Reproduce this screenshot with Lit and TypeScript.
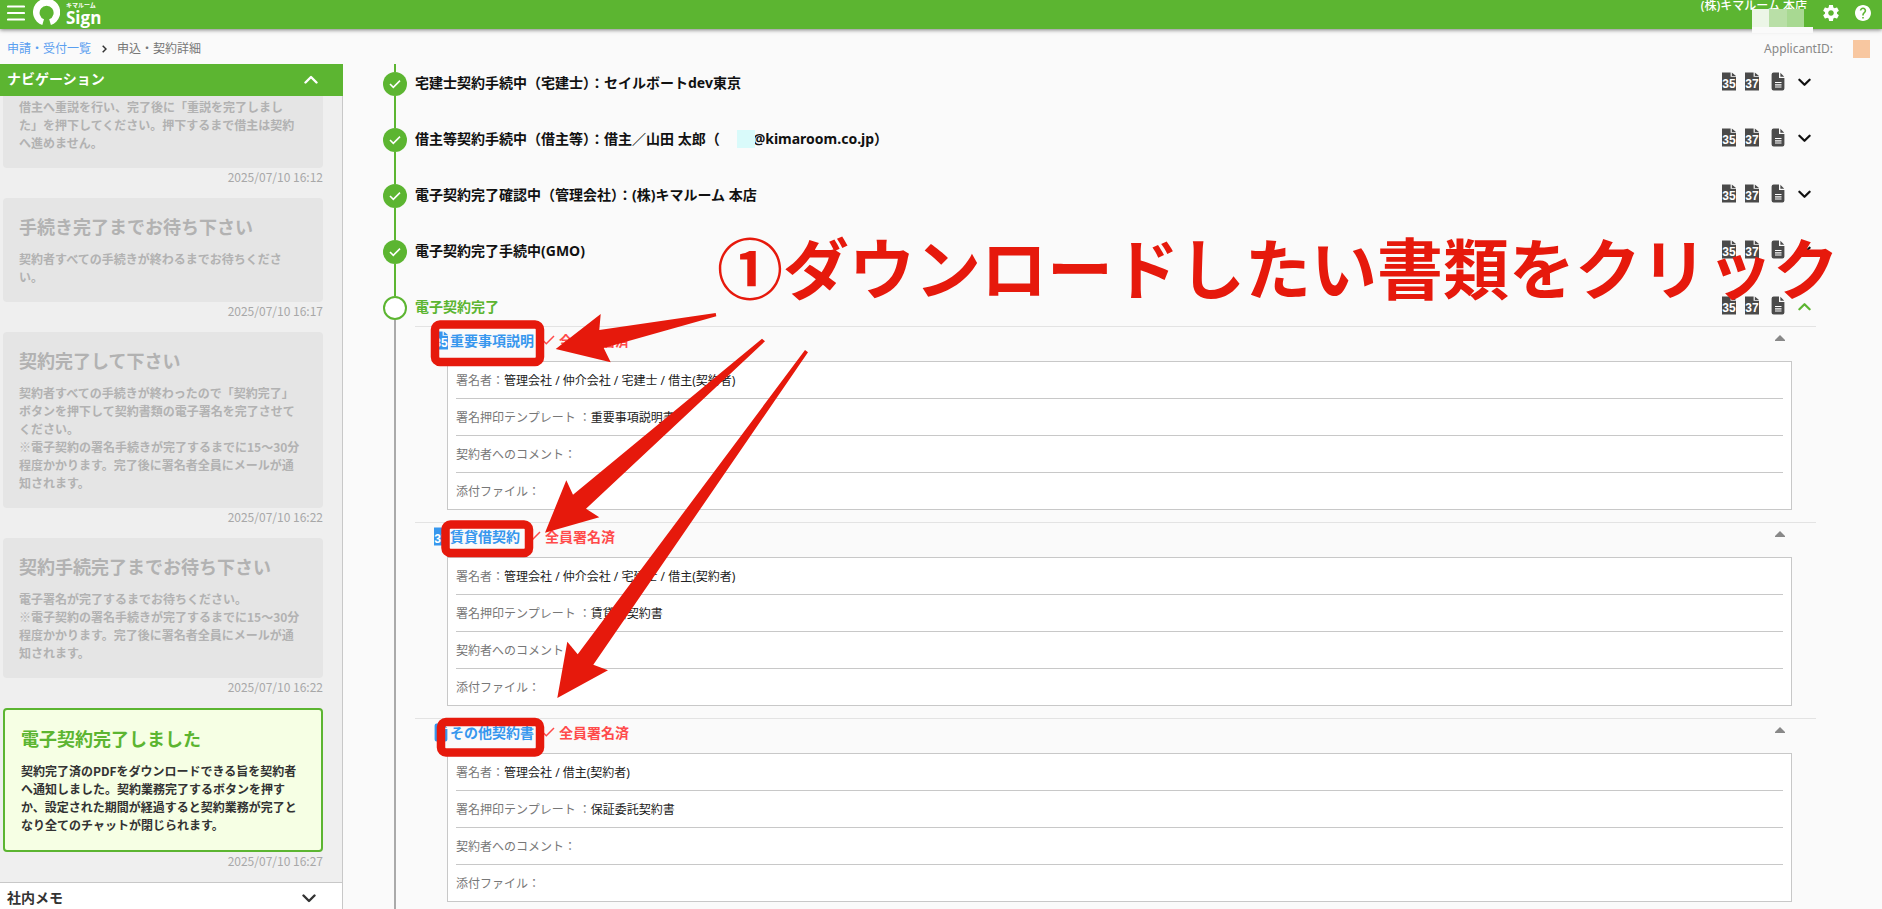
import { LitElement, html, svg, css, nothing } from "lit";
import { customElement, property } from "lit/decorators.js";
import { classMap } from "lit/directives/class-map.js";

interface Message {
  title?: string;
  body: string[];
  date: string;
  active?: boolean;
}

interface Doc {
  kind: "35" | "37" | "doc";
  name: string;
  signers: string;
  template: string;
}

const MESSAGES: Message[] = [
  {
    body: ["借主へ重説を行い、完了後に「重説を完了しました」を押下してください。押下するまで借主は契約へ進めません。"],
    date: "2025/07/10 16:12",
  },
  {
    title: "手続き完了までお待ち下さい",
    body: ["契約者すべての手続きが終わるまでお待ちください。"],
    date: "2025/07/10 16:17",
  },
  {
    title: "契約完了して下さい",
    body: [
      "契約者すべての手続きが終わったので「契約完了」ボタンを押下して契約書類の電子署名を完了させてください。",
      "※電子契約の署名手続きが完了するまでに15～30分程度かかります。完了後に署名者全員にメールが通知されます。",
    ],
    date: "2025/07/10 16:22",
  },
  {
    title: "契約手続完了までお待ち下さい",
    body: [
      "電子署名が完了するまでお待ちください。",
      "※電子契約の署名手続きが完了するまでに15～30分程度かかります。完了後に署名者全員にメールが通知されます。",
    ],
    date: "2025/07/10 16:22",
  },
  {
    title: "電子契約完了しました",
    body: [
      "契約完了済のPDFをダウンロードできる旨を契約者へ通知しました。契約業務完了するボタンを押すか、設定された期間が経過すると契約業務が完了となり全てのチャットが閉じられます。",
    ],
    date: "2025/07/10 16:27",
    active: true,
  },
];

const DOCS: Doc[] = [
  { kind: "35", name: "重要事項説明", signers: "管理会社 / 仲介会社 / 宅建士 / 借主(契約者)", template: "重要事項説明書" },
  { kind: "37", name: "賃貸借契約", signers: "管理会社 / 仲介会社 / 宅建士 / 借主(契約者)", template: "賃貸借契約書" },
  { kind: "doc", name: "その他契約書", signers: "管理会社 / 借主(契約者)", template: "保証委託契約書" },
];

const base = css`
  *,
  *::before,
  *::after {
    box-sizing: border-box;
  }
  button {
    appearance: none;
    border: 0;
    padding: 0;
    margin: 0;
    background: none;
    color: inherit;
    font: inherit;
    cursor: pointer;
    display: flex;
    align-items: center;
    justify-content: center;
  }
  svg {
    display: block;
    flex: none;
  }
  a {
    text-decoration: none;
  }
`;

const chevron = (up: boolean, w = 14) => html`
  <svg width=${w} height="9" viewBox="0 0 14 9" fill="none" stroke="currentColor" stroke-width="2.4" stroke-linecap="round" stroke-linejoin="round" aria-hidden="true">
    <path d=${up ? "M1.5 7.5 7 2l5.5 5.5" : "M1.5 1.5 7 7l5.5-5.5"}></path>
  </svg>
`;

@customElement("file-icon")
export class FileIcon extends LitElement {
  @property() kind: "35" | "37" | "doc" = "doc";

  static styles = css`
    :host {
      display: block;
      flex: none;
    }
    svg {
      display: block;
    }
    .num {
      font: bold 12px "Liberation Sans", Arial, sans-serif;
      fill: #fff;
      text-anchor: middle;
    }
  `;

  render() {
    if (this.kind === "doc") {
      return html`<svg width="14" height="19" viewBox="0 0 14 19" aria-hidden="true">
        <path fill="currentColor" d="M2.6.5H8V6h5.4v10.6a2 2 0 0 1-2 2H2.6a2 2 0 0 1-2-2V2.5a2 2 0 0 1 2-2z"></path>
        <path fill="currentColor" d="M9.4.7 13.200 4.700H9.400z"></path>
        <path stroke="#fff" stroke-width="1.2" d="M4 10.500h6.500M4 12.800h6.500M4 15h6.500"></path>
      </svg>`;
    }
    return html`<svg width="14" height="19" viewBox="0 0 14 19" aria-hidden="true">
      <path fill="currentColor" d="M0 .5h8.600v4.300H14V18.500H0z"></path>
      <path fill="currentColor" d="M9.800.5 14 4H9.800z"></path>
      ${svg`<text class="num" x="7" y="16">${this.kind}</text>`}
    </svg>`;
  }
}

@customElement("app-header")
export class AppHeader extends LitElement {
  static styles = [
    base,
    css`
      :host {
        display: block;
        position: relative;
        z-index: 1;
        flex: none;
      }
      .bar {
        display: flex;
        align-items: flex-start;
        height: 29px;
        padding: 0 11px 0 7px;
        background: #5cb531;
        color: #fff;
        box-shadow: 0 1px 4px rgba(0, 0, 0, 0.5);
      }
      .menu {
        width: 18px;
        height: 26px;
      }
      .logo {
        display: flex;
        gap: 6px;
        margin-left: 8px;
        color: #fff;
      }
      .words {
        display: flex;
        flex-direction: column;
        font-weight: 700;
      }
      .kana {
        font-size: 6px;
        line-height: 10px;
      }
      .sign {
        font: 700 17px/16px "Open Sans", sans-serif;
      }
      .right {
        position: relative;
        display: flex;
        gap: 16px;
        margin-left: auto;
      }
      .user {
        font-size: 12px;
        line-height: 11px;
        font-weight: 500;
      }
      .tool {
        width: 16px;
        height: 26px;
      }
      .masks {
        position: absolute;
        top: 9px;
        right: 58px;
        display: grid;
        grid-template-columns: 17px 18px 17px 9px;
        grid-template-rows: 18px 6px;
      }
      .m1 {
        background: #ecf6e7;
      }
      .m2 {
        background: #b9dfa7;
      }
      .m3 {
        background: #a8d992;
      }
      .m4 {
        background: #5cb531;
      }
      .m5 {
        grid-column: 1 / -1;
        background: #fafafa;
      }
    `,
  ];

  render() {
    return html`
      <header class="bar">
        <button class="menu" aria-label="メニュー">
          <svg width="18" height="16" viewBox="0 0 18 16" stroke="#fff" stroke-width="2.2" stroke-linecap="round">
            <path d="M1 1.500h16M1 8h16M1 14.500h16"></path>
          </svg>
        </button>
        <a class="logo" href="#" aria-label="キマルーム Sign">
          <svg width="27" height="26" viewBox="0 0 27 26">
            <path fill="#fff" d="M9.300 25 11 19.300A7 7 0 1 1 16.200 19.300L17.900 25A13.600 13.600 0 1 0 9.300 25z"></path>
          </svg>
          <span class="words"><span class="kana">キマルーム</span><span class="sign">Sign</span></span>
        </a>
        <div class="right">
          <span class="user">(株)キマルーム 本店</span>
          <button class="tool" aria-label="設定">
            <svg width="16" height="16" viewBox="2 2 20 20" fill="#fff">
              <path d="M19.430 12.980c.040-.320.070-.640.070-.980s-.030-.660-.070-.980l2.110-1.650c.190-.150.240-.420.120-.640l-2-3.460c-.120-.220-.390-.300-.610-.220l-2.490 1c-.520-.400-1.080-.730-1.690-.980l-.380-2.650C14.460 2.180 14.250 2 14 2h-4c-.250 0-.460.180-.490.420l-.380 2.650c-.610.250-1.170.590-1.690.980l-2.490-1c-.230-.090-.490 0-.610.220l-2 3.460c-.130.220-.070.490.120.640l2.110 1.650c-.040.320-.070.650-.070.980s.030.660.070.980l-2.110 1.650c-.190.150-.240.420-.120.640l2 3.460c.120.220.390.300.610.220l2.490-1c.520.400 1.080.730 1.690.980l.380 2.650c.030.240.240.420.490.420h4c.250 0 .460-.180.490-.420l.380-2.650c.610-.250 1.170-.590 1.690-.980l2.490 1c.230.090.490 0 .610-.220l2-3.460c.120-.220.070-.490-.120-.640l-2.110-1.650zM12 15.500c-1.930 0-3.500-1.570-3.500-3.500s1.570-3.500 3.500-3.500 3.500 1.570 3.500 3.500-1.570 3.500-3.500 3.500z"></path>
            </svg>
          </button>
          <button class="tool" aria-label="ヘルプ">
            <svg width="16" height="16" viewBox="2 2 20 20" fill="#fff">
              <path d="M12 2C6.480 2 2 6.480 2 12s4.480 10 10 10 10-4.480 10-10S17.520 2 12 2zm1 17h-2v-2h2v2zm2.070-7.750-.900.920C13.450 12.900 13 13.500 13 15h-2v-.500c0-1.100.450-2.100 1.170-2.830l1.240-1.260c.370-.360.590-.860.590-1.410 0-1.100-.900-2-2-2s-2 .900-2 2H8c0-2.210 1.790-4 4-4s4 1.790 4 4c0 .880-.360 1.680-.930 2.250z"></path>
            </svg>
          </button>
          <div class="masks" aria-hidden="true">
            <i class="m1"></i><i class="m2"></i><i class="m3"></i><i class="m4"></i><i class="m5"></i>
          </div>
        </div>
      </header>
    `;
  }
}

@customElement("nav-panel")
export class NavPanel extends LitElement {
  static styles = [
    base,
    css`
      :host {
        display: flex;
        flex-direction: column;
        flex: 0 0 343px;
        min-height: 0;
        background: #efefef;
        border-right: 1px solid #c8c8c8;
      }
      .head {
        display: flex;
        flex: none;
        align-items: center;
        justify-content: space-between;
        height: 32px;
        margin-right: -1px;
        padding: 0 25px 2px 7px;
        background: #5cb531;
        color: #fff;
      }
      h2 {
        margin: 0;
        font-size: 14px;
        line-height: 30px;
        font-weight: 700;
      }
      .list {
        flex: 1;
        min-height: 0;
        overflow: hidden;
        display: flex;
        flex-direction: column;
        justify-content: flex-end;
        padding: 0 19px 0 3px;
      }
      .card {
        flex: none;
        padding: 16px 23px 16px 16px;
        border-radius: 4px;
        background: #e5e5e5;
        color: #b2b2b2;
        font-weight: 700;
      }
      .card.active {
        border: 2px solid #5cb531;
        padding-right: 20px;
        background: #f6ffe4;
        color: #333;
      }
      h3 {
        margin: 0 0 9px;
        font-size: 18px;
        line-height: 27px;
        font-weight: 700;
        white-space: nowrap;
      }
      .active h3 {
        color: #5cb531;
      }
      p {
        margin: 0;
        font-family: "Noto Sans CJK JP", sans-serif;
        font-size: 12px;
        line-height: 18px;
      }
      time {
        flex: none;
        margin-bottom: 12px;
        font-family: "Noto Sans CJK JP", sans-serif;
        font-size: 12px;
        line-height: 18px;
        text-align: right;
        color: #a8a8a8;
      }
      .memo {
        display: flex;
        flex: 0 0 27px;
        justify-content: space-between;
        overflow: hidden;
        padding: 0 26px 0 7px;
        background: #fff;
        border-top: 1px solid #c8c8c8;
        color: #333;
      }
      .memo button,
      .head button {
        height: 30px;
      }
    `,
  ];

  render() {
    return html`
      <div class="head">
        <h2>ナビゲーション</h2>
        <button aria-label="閉じる">${chevron(true)}</button>
      </div>
      <div class="list">
        ${MESSAGES.map(
          (m) => html`
            <article class=${classMap({ card: true, active: !!m.active })}>
              ${m.title ? html`<h3>${m.title}</h3>` : nothing}
              ${m.body.map((line) => html`<p>${line}</p>`)}
            </article>
            <time>${m.date}</time>
          `,
        )}
      </div>
      <div class="memo">
        <h2>社内メモ</h2>
        <button aria-label="開く">${chevron(false)}</button>
      </div>
    `;
  }
}

@customElement("doc-section")
export class DocSection extends LitElement {
  @property({ attribute: false }) doc!: Doc;

  static styles = [
    base,
    css`
      :host {
        display: block;
        border-top: 1px solid #e3e3e3;
        padding: 0 24px 12px 19px;
      }
      .title {
        display: flex;
        align-items: center;
        height: 34px;
        padding: 0 7px 8px 0;
        font-size: 14px;
        font-weight: 700;
      }
      .link {
        display: flex;
        align-items: center;
        gap: 2px;
        color: #3797ee;
      }
      .state {
        display: flex;
        align-items: center;
        gap: 4px;
        margin-left: 8px;
        color: #ff4b4b;
      }
      .toggle {
        align-self: flex-start;
        margin: 8px 0 0 auto;
        color: #888;
      }
      dl {
        margin: 0 0 0 13px;
        padding: 0 8px;
        border: 1px solid #c8c8c8;
        background: #fff;
        font-size: 12px;
        line-height: 34px;
      }
      .row {
        display: flex;
        padding-top: 2px;
      }
      .row + .row {
        border-top: 1px solid #c8c8c8;
      }
      dt {
        color: #777;
        white-space: pre;
      }
      dd {
        margin: 0;
        color: #222;
      }
    `,
  ];

  render() {
    const d = this.doc;
    const rows: [string, string][] = [
      ["署名者：", d.signers],
      ["署名押印テンプレート ：", d.template],
      ["契約者へのコメント：", ""],
      ["添付ファイル：", ""],
    ];
    return html`
      <div class="title">
        <a class="link" href="#"><file-icon kind=${d.kind}></file-icon>${d.name}</a>
        <span class="state">
          <svg width="13" height="10" viewBox="0 0 13 10" fill="none" stroke="currentColor" stroke-width="1.5" aria-hidden="true">
            <path d="M1 5.500 4.300 8.700 12 1"></path>
          </svg>
          全員署名済
        </span>
        <button class="toggle" aria-label="閉じる">
          <svg width="10" height="6" viewBox="0 0 10 6"><path fill="currentColor" d="M5 0 10 5v1H0V5z"></path></svg>
        </button>
      </div>
      <dl>
        ${rows.map(([k, v]) => html`<div class="row"><dt>${k}</dt><dd>${v}</dd></div>`)}
      </dl>
    `;
  }
}

@customElement("step-list")
export class StepList extends LitElement {
  static styles = [
    base,
    css`
      :host {
        display: block;
        flex: 1;
        min-width: 0;
        overflow: hidden;
        padding: 0 66px 0 40px;
      }
      ol {
        list-style: none;
        margin: 0;
        padding: 0;
        display: flex;
        flex-direction: column;
        height: 100%;
      }
      .lead {
        flex: none;
        display: flex;
        justify-content: center;
        height: 8px;
        width: 24px;
      }
      .step {
        flex: none;
        display: grid;
        grid-template-columns: 24px minmax(0, 1fr);
        column-gap: 8px;
        min-height: 56px;
      }
      .step.current {
        flex: 1 0 auto;
      }
      .rail {
        display: flex;
        flex-direction: column;
        align-items: center;
      }
      .line {
        width: 2px;
        background: #5cb531;
      }
      .rail .line {
        flex: 1;
      }
      .current .line {
        background: #aaa;
      }
      .dot {
        flex: none;
        display: flex;
        align-items: center;
        justify-content: center;
        width: 24px;
        height: 24px;
        border-radius: 50%;
        background: #5cb531;
      }
      .current .dot {
        background: #fff;
        border: 2px solid #5cb531;
      }
      .row {
        display: flex;
        align-items: center;
        justify-content: space-between;
        height: 24px;
        color: #111;
      }
      h4 {
        display: flex;
        align-items: center;
        margin: 0;
        font-size: 14px;
        line-height: 22px;
        font-weight: 700;
        white-space: pre;
        align-self: flex-start;
      }
      .current h4 {
        color: #5cb531;
      }
      .mask {
        width: 18px;
        height: 18px;
        margin: 0 -2px 0 17px;
        background: #d9fafa;
        z-index: 1;
      }
      .tools {
        display: grid;
        grid-template-columns: 23px 24px 28px 24px;
        color: #4a4a4a;
        margin-top: -6px;
      }
      .tools button {
        height: 20px;
      }
      .tools .open {
        padding-top: 2px;
        color: #111;
      }
      .current .tools .open {
        color: #5cb531;
      }
      .docs {
        margin-top: 6px;
      }
    `,
  ];

  private head(label: unknown, up = false) {
    return html`
      <div class="row">
        <h4>${label}</h4>
        <div class="tools">
          <button aria-label="35条書面"><file-icon kind="35"></file-icon></button>
          <button aria-label="37条書面"><file-icon kind="37"></file-icon></button>
          <button aria-label="その他書類"><file-icon kind="doc"></file-icon></button>
          <button class="open" aria-label="開閉">${chevron(up, 13)}</button>
        </div>
      </div>
    `;
  }

  render() {
    const done = [
      "宅建士契約手続中（宅建士）：セイルボートdev東京",
      html`借主等契約手続中（借主等）：借主／山田 太郎（<i class="mask"></i>@kimaroom.co.jp）`,
      "電子契約完了確認中（管理会社）：(株)キマルーム 本店",
      "電子契約完了手続中(GMO)",
    ];
    return html`
      <ol>
        <li class="lead" aria-hidden="true"><span class="line"></span></li>
        ${done.map(
          (label) => html`
            <li class="step">
              <div class="rail">
                <span class="dot">
                  <svg width="12" height="10" viewBox="0 0 12 10" fill="none" stroke="#fff" stroke-width="1.6" aria-hidden="true">
                    <path d="M1 5 4.300 8.300 11 1.600"></path>
                  </svg>
                </span>
                <span class="line"></span>
              </div>
              ${this.head(label)}
            </li>
          `,
        )}
        <li class="step current">
          <div class="rail"><span class="dot"></span><span class="line"></span></div>
          <div>
            ${this.head("電子契約完了", true)}
            <div class="docs">${DOCS.map((d) => html`<doc-section .doc=${d}></doc-section>`)}</div>
          </div>
        </li>
      </ol>
    `;
  }
}

/* Red callouts laid over the screen: caption, frames and arrows. */
@customElement("guide-overlay")
export class GuideOverlay extends LitElement {
  static styles = css`
    :host {
      position: absolute;
      inset: 0;
      z-index: 2;
      overflow: hidden;
      pointer-events: none;
      color: #e6190c;
    }
    .marks {
      position: absolute;
      top: 0;
      left: 0;
      overflow: visible;
    }
    .caption {
      position: absolute;
      top: 220px;
      left: 717px;
      margin: 0;
      font-size: 66px;
      line-height: 96px;
      font-weight: 700;
      white-space: nowrap;
    }
  `;

  render() {
    return html`
      <p class="caption">①ダウンロードしたい書類をクリック</p>
      <svg class="marks" width="900" height="800" viewBox="0 0 900 800" aria-hidden="true">
        <g fill="none" stroke="currentColor" stroke-width="8.5">
          <rect x="435" y="324.500" width="105" height="37.500" rx="5"></rect>
          <rect x="445.500" y="524.500" width="83.500" height="28.500" rx="5"></rect>
          <rect x="441" y="722" width="99" height="30.500" rx="5"></rect>
        </g>
        <g fill="currentColor">
          <path d="M555.700 349 600.700 314 599.300 330 715.700 313 716.300 316.300 603.700 348 610.700 362.300z"></path>
          <path d="M545 532.700 566.300 480.300 573 494.700 762 338.700 765 341.300 586 508.700 599.300 517.300z"></path>
          <path d="M557.300 698 567.300 641.700 577.700 654.300 805 350 808 352.300 593.300 664.700 608 670.300z"></path>
        </g>
      </svg>
    `;
  }
}

@customElement("app-root")
export class AppRoot extends LitElement {
  static styles = [
    base,
    css`
      :host {
        display: flex;
        flex-direction: column;
        position: relative;
        height: 100vh;
        overflow: hidden;
        background: #fafafa;
        color: #222;
        font-family: "Noto Sans", "Noto Sans CJK JP", sans-serif;
      }
      .crumbs {
        display: flex;
        flex: none;
        align-items: center;
        height: 35px;
        padding: 4px 12px 0 7px;
        font-size: 12px;
        line-height: 18px;
        color: #777;
      }
      .crumbs a {
        color: #5a9ff0;
      }
      .crumbs svg {
        margin: 0 10px 0 11px;
      }
      .id {
        margin-left: auto;
        color: #888;
      }
      .chip {
        width: 17px;
        height: 18px;
        margin-left: 20px;
        background: #f8c7a0;
      }
      .body {
        display: flex;
        flex: 1;
        min-height: 0;
      }
    `,
  ];

  render() {
    return html`
      <app-header></app-header>
      <nav class="crumbs">
        <a href="#">申請・受付一覧</a>
        <svg width="5" height="8" viewBox="0 0 5 8" fill="none" stroke="#333" stroke-width="1.5" aria-hidden="true"><path d="M.7.7 4 4 .7 7.300"></path></svg>
        <span>申込・契約詳細</span>
        <span class="id">ApplicantID:</span><i class="chip"></i>
      </nav>
      <div class="body">
        <nav-panel></nav-panel>
        <step-list></step-list>
      </div>
      <guide-overlay></guide-overlay>
    `;
  }
}
